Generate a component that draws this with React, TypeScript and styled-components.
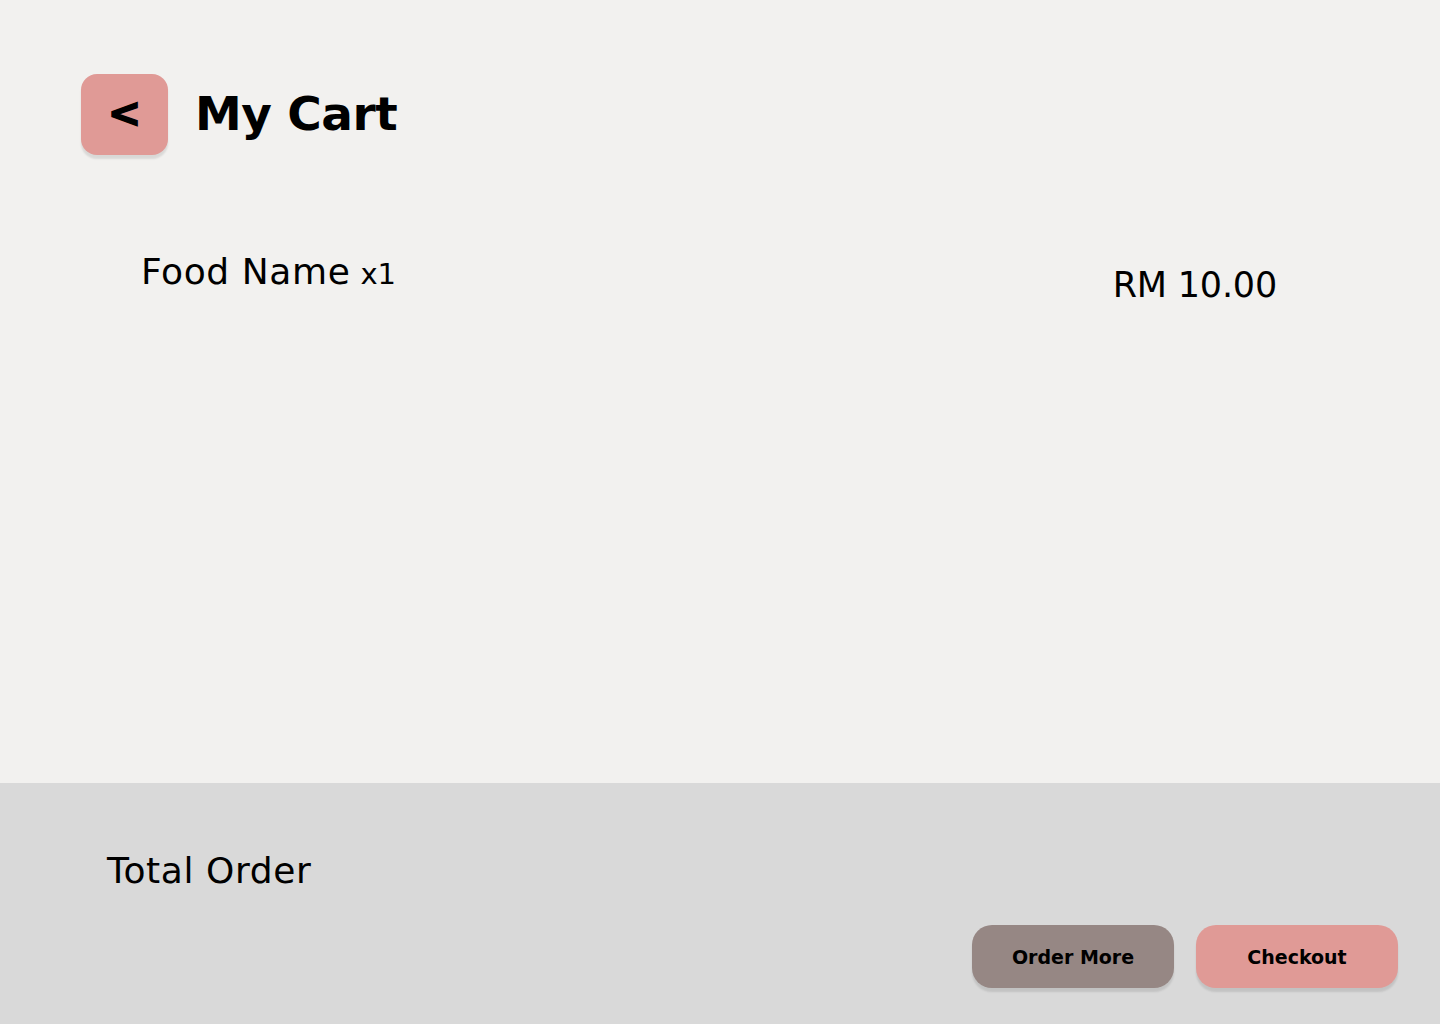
import React from "react";
import styled, { createGlobalStyle } from "styled-components";

const GlobalStyle = createGlobalStyle`
  html, body { margin: 0; padding: 0; }
  body {
    background: #f2f1ef;
    font-family: "DejaVu Sans", "Open Sans", sans-serif;
    color: #000;
  }
`;

const Page = styled.div`
  display: flex;
  flex-direction: column;
  height: 1024px;
`;

const Main = styled.main`
  flex: 1;
  display: flex;
  flex-direction: column;
  padding: 74px 163px 0 81px;
`;

const Header = styled.header`
  display: flex;
  align-items: center;
  gap: 27px;
`;

const BackButton = styled.button`
  width: 87px;
  height: 81px;
  border: none;
  border-radius: 16px;
  background: #e09a96;
  box-shadow: 0 4px 2px rgba(0, 0, 0, 0.1);
  font-family: inherit;
  font-weight: 700;
  font-size: 40px;
  -webkit-text-stroke: 1.5px #000;
  color: #000;
  display: flex;
  align-items: center;
  justify-content: center;
  padding: 0 0 4px;
  cursor: pointer;
`;

const Title = styled.h1`
  margin: 0;
  font-size: 47px;
  font-weight: 700;
  letter-spacing: -0.5px;
  line-height: 1;
  padding-bottom: 2px;
`;

const ItemRow = styled.div`
  display: flex;
  justify-content: space-between;
  align-items: flex-start;
  margin-top: 99px;
  padding-left: 60px;
`;

const ItemName = styled.div`
  font-size: 36px;
  line-height: 1;
  letter-spacing: 0.6px;
`;

const Qty = styled.span`
  font-size: 29px;
  letter-spacing: 0;
  margin-left: 10px;
`;

const Price = styled.div`
  font-size: 35px;
  line-height: 1;
  padding-top: 14px;
  letter-spacing: -0.2px;
`;

const Footer = styled.footer`
  height: 241px;
  background: #d9d9d9;
  display: flex;
  flex-direction: column;
  justify-content: space-between;
  padding: 70px 42px 36px 107px;
  box-sizing: border-box;
`;

const TotalLabel = styled.div`
  font-size: 36px;
  line-height: 1;
  letter-spacing: 0.6px;
`;

const Actions = styled.div`
  display: flex;
  justify-content: flex-end;
  gap: 22px;
`;

const ActionButton = styled.button<{ $tone: "muted" | "accent" }>`
  width: 202px;
  height: 63px;
  border: none;
  border-radius: 20px;
  background: ${(p) => (p.$tone === "muted" ? "#968784" : "#e09a96")};
  box-shadow: 0 4px 2px rgba(0, 0, 0, 0.1);
  font-family: inherit;
  font-weight: 700;
  font-size: 19px;
  color: #000;
  cursor: pointer;
`;

export default function App() {
  return (
    <>
      <GlobalStyle />
      <Page>
        <Main>
          <Header>
            <BackButton aria-label="Back">&lt;</BackButton>
            <Title>My Cart</Title>
          </Header>
          <ItemRow>
            <ItemName>
              Food Name<Qty>x1</Qty>
            </ItemName>
            <Price>RM 10.00</Price>
          </ItemRow>
        </Main>
        <Footer>
          <TotalLabel>Total Order</TotalLabel>
          <Actions>
            <ActionButton $tone="muted">Order More</ActionButton>
            <ActionButton $tone="accent">Checkout</ActionButton>
          </Actions>
        </Footer>
      </Page>
    </>
  );
}
